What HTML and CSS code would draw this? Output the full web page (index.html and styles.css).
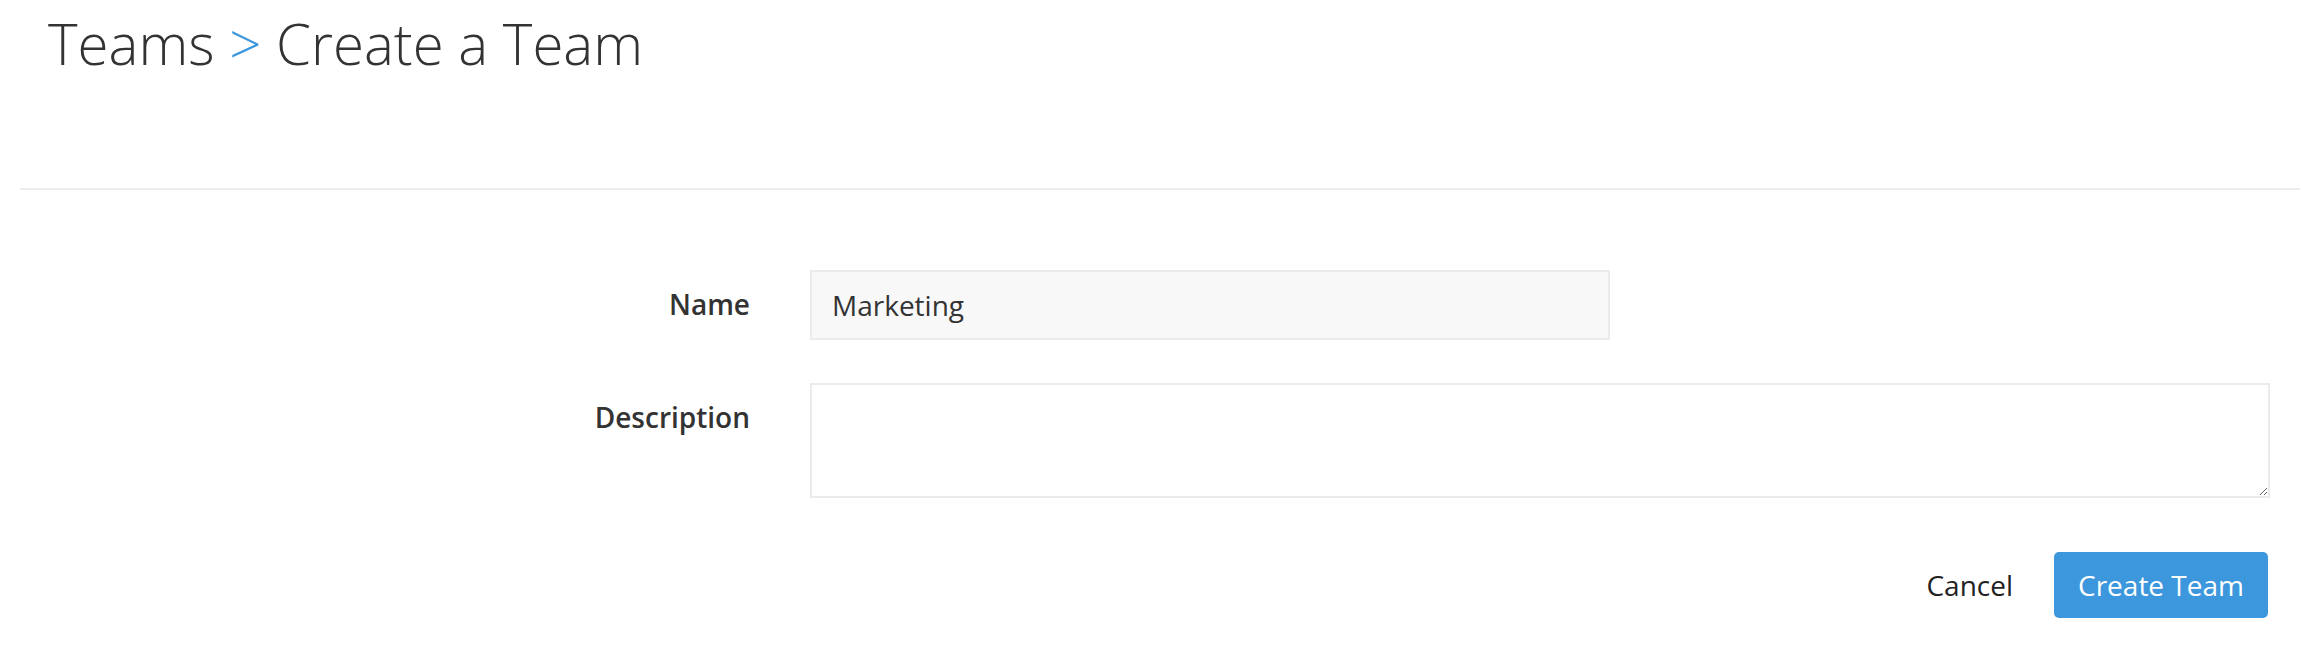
FILE: index.html
```html
<!DOCTYPE html>
<html lang="en">
<head>
<meta charset="utf-8">
<title>Create a Team</title>
<link rel="stylesheet" href="styles.css">
</head>
<body>
<header class="page-header">
  <h1 class="title">Teams <span class="sep">&gt;</span> Create a Team</h1>
</header>
<hr class="divider">
<form class="team-form">
  <div class="form-row">
    <label class="form-label" for="name">Name</label>
    <div class="form-field">
      <input class="text-input" id="name" type="text" value="Marketing">
    </div>
  </div>
  <div class="form-row">
    <label class="form-label" for="desc">Description</label>
    <div class="form-field">
      <textarea class="text-area" id="desc"></textarea>
    </div>
  </div>
  <div class="form-actions">
    <button type="button" class="btn-cancel">Cancel</button>
    <button type="button" class="btn-primary">Create Team</button>
  </div>
</form>
</body>
</html>
```
FILE: styles.css
```css
* { box-sizing: border-box; }
html, body {
  margin: 0;
  padding: 0;
  background: #ffffff;
  font-family: "Open Sans", "Liberation Sans", sans-serif;
  color: #333333;
}
.page-header {
  padding: 10px 0 0 48px;
}
.title {
  margin: 0;
  font-size: 56.4px;
  font-weight: 300;
  line-height: 68px;
  color: #333333;
}
.sep {
  color: #3d97dc;
}
.divider {
  margin: 110px 2px 0 20px;
  border: 0;
  height: 2px;
  background: #ececec;
}
.team-form {
  padding: 80px 0 0 20px;
  width: 2270px;
}
.form-row {
  display: flex;
  gap: 60px;
  margin-bottom: 43px;
}
.form-row + .form-row {
  margin-bottom: 54px;
}
.form-label {
  flex: 0 0 730px;
  text-align: right;
  font-size: 28px;
  font-weight: 600;
  line-height: 40px;
  padding-top: 14px;
  color: #333333;
}
.form-field {
  flex: 1 1 auto;
}
.text-input {
  display: block;
  width: 800px;
  height: 70px;
  border: 2px solid #ebebeb;
  background: #f8f8f8;
  padding: 0 20px;
  font-family: inherit;
  font-size: 28px;
  color: #333333;
  outline: none;
}
.text-area {
  display: block;
  width: 100%;
  height: 115px;
  border: 2px solid #ebebeb;
  background: #ffffff;
  padding: 16px 20px;
  font-family: inherit;
  font-size: 28px;
  color: #333333;
  resize: vertical;
  outline: none;
}
.form-actions {
  display: flex;
  justify-content: flex-end;
  align-items: center;
  gap: 41px;
  padding-right: 2px;
}
.btn-cancel {
  background: none;
  border: 0;
  padding: 0;
  font-family: inherit;
  font-size: 28px;
  color: #222222;
  cursor: pointer;
}
.btn-primary {
  height: 66px;
  padding: 0 24px;
  border: 0;
  border-radius: 5px;
  background: #3d97dc;
  color: #ffffff;
  font-family: inherit;
  font-size: 28px;
  cursor: pointer;
}
```
